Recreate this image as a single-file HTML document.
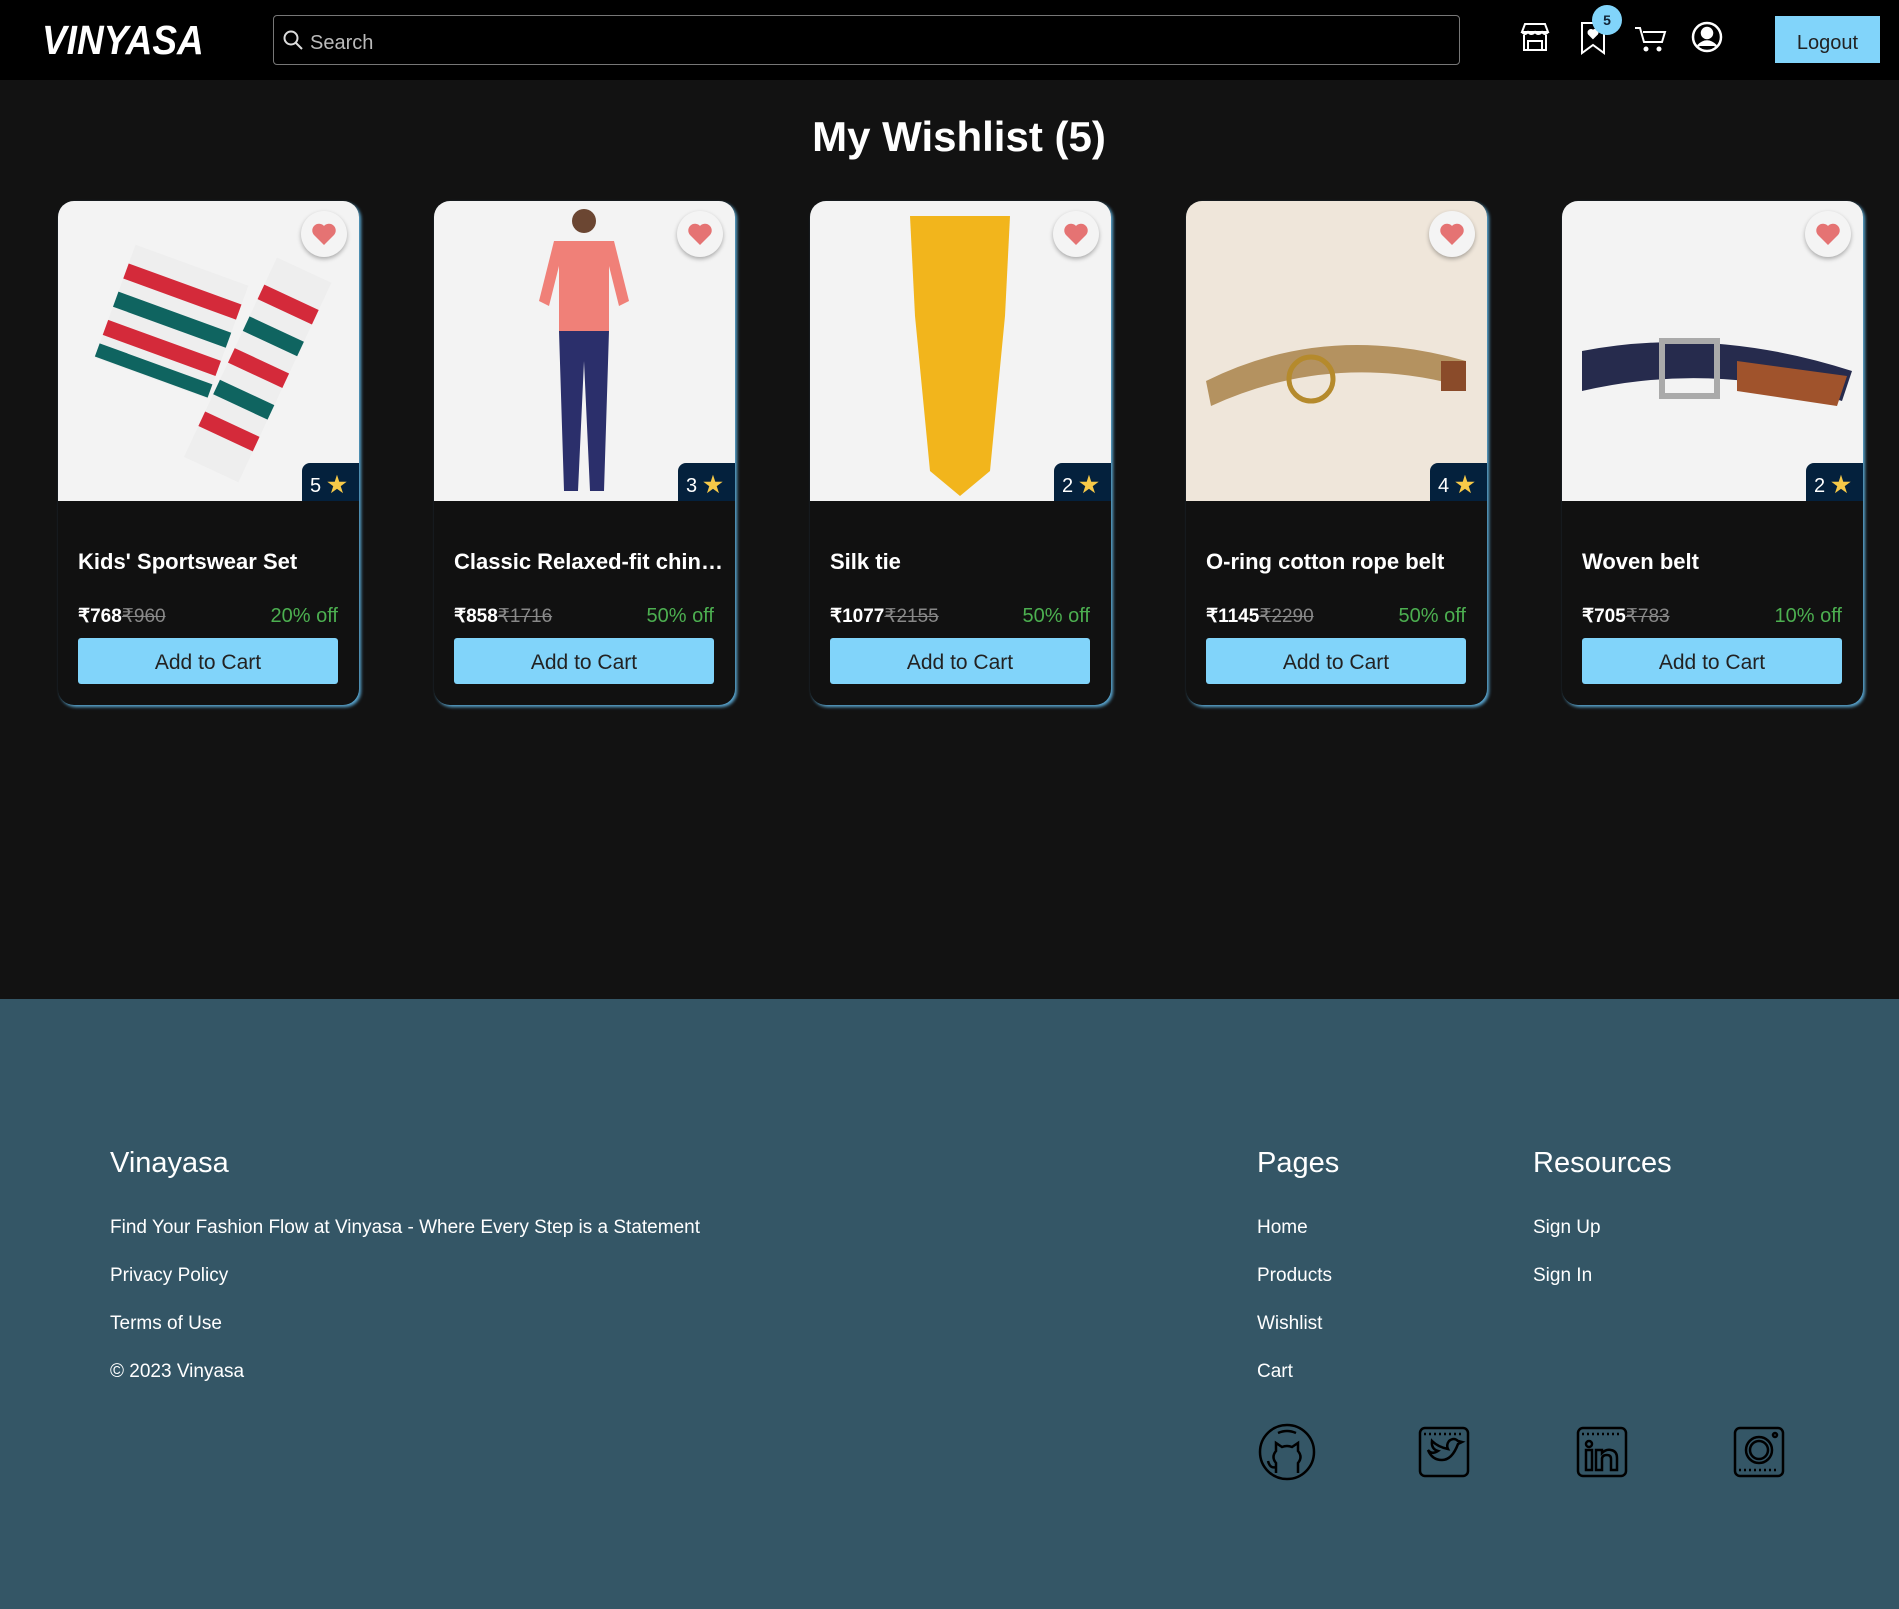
<!DOCTYPE html>
<html><head><meta charset="utf-8"><style>
*{box-sizing:border-box;margin:0;padding:0}
body{width:1899px;height:1609px;background:#121212;font-family:"Liberation Sans",sans-serif;color:#fff;position:relative;overflow:hidden}
.hdr{position:absolute;left:0;top:0;width:1899px;height:80px;background:#000}
.logo{position:absolute;left:42px;top:20px;font-size:37px;font-weight:bold;font-style:italic;letter-spacing:0px;transform:scaleY(1.1)}
.search{position:absolute;left:273px;top:15px;width:1187px;height:50px;border:1px solid #777;border-radius:4px;background:#000}
.search span{position:absolute;left:36px;top:16px;font-size:20px;color:#bbb}
.ico{position:absolute;top:20px}
.logout{position:absolute;left:1775px;top:16px;width:105px;height:47px;background:#81d4fa;color:#222;font-size:20px;text-align:center;line-height:54px}
.badge{position:absolute;left:1592px;top:5px;width:30px;height:30px;border-radius:50%;background:#81d4fa;color:#123;font-size:14px;font-weight:bold;text-align:center;line-height:30px}
h1{position:absolute;left:0;width:1918px;top:113px;text-align:center;font-size:42px;font-weight:bold}
.card{position:absolute;top:201px;width:301px;height:504px;background:#111;border-radius:16px;box-shadow:2px 2px 3px #5ba9d4;overflow:hidden}
.img{position:absolute;left:0;top:0;width:301px;height:300px;background:#f3f3f3;overflow:hidden}
.heart{position:absolute;right:12px;top:10px;width:46px;height:46px;border-radius:50%;background:#f4f4f4;box-shadow:0 2px 4px rgba(0,0,0,.3)}
.rate{position:absolute;right:0;top:262px;width:57px;height:38px;background:#04213d;border-top-left-radius:8px;font-size:20px;padding:9px 0 0 8px}
.rate b{color:#f7c948;font-size:22px;margin-left:6px}
.name{position:absolute;left:20px;top:348px;font-size:22px;font-weight:bold;width:270px;white-space:nowrap;overflow:hidden;text-overflow:ellipsis}
.price{position:absolute;left:20px;top:404px;font-size:19px;font-weight:bold}
.price s{color:#888;font-weight:normal}
.off{position:absolute;right:21px;top:404px;font-size:20px;color:#4caf50}
.btn{position:absolute;left:20px;top:437px;width:260px;height:46px;background:#81d4fa;border-radius:3px;color:#222;font-size:21px;text-align:center;line-height:50px}
.foot{position:absolute;left:0;top:999px;width:1899px;height:610px;background:#345666}
.foot .t{position:absolute;font-size:29px}
.foot .l{position:absolute;font-size:19px}
</style></head><body>
<div class="hdr">
<div class="logo">VINYASA</div>
<div class="search"><svg style="position:absolute;left:8px;top:13px" width="22" height="22" viewBox="0 0 22 22" fill="none" stroke="#ddd" stroke-width="2"><circle cx="9" cy="9" r="6.5"/><path d="M14 14l6 6"/></svg><span>Search</span></div>
<svg class="ico" style="left:1518px" width="34" height="34" viewBox="0 0 34 34" fill="none" stroke="#fff" stroke-width="2"><path d="M4 12l3-8h20l3 8zM4 12q3 4 6 0q3 4 7 0q3 4 7 0q3 4 6 0M6 15v15h22V15M10 30v-9h14v9"/></svg>
<svg class="ico" style="left:1578px" width="30" height="36" viewBox="0 0 30 36" fill="none" stroke="#fff" stroke-width="2"><path d="M4 3h22v30l-11-8-11 8z"/><path d="M15 18l-4-4a2.5 2.5 0 0 1 4-3a2.5 2.5 0 0 1 4 3z" fill="#fff"/></svg>
<div class="badge">5</div>
<svg class="ico" style="left:1633px;top:24px" width="34" height="30" viewBox="0 0 34 30" fill="none" stroke="#fff" stroke-width="2"><path d="M2 4h5l4 14h18l3-10H10"/><circle cx="13" cy="25" r="1.5" fill="#fff"/><circle cx="26" cy="25" r="1.5" fill="#fff"/></svg>
<svg class="ico" style="left:1690px" width="34" height="34" viewBox="0 0 34 34" fill="none" stroke="#fff" stroke-width="2.5"><circle cx="17" cy="17" r="14"/><circle cx="17" cy="13" r="5" fill="#fff"/><path d="M8 26q9-9 18 0" fill="#fff"/></svg>
<div class="logout">Logout</div>
</div>
<h1>My Wishlist (5)</h1>

<div class="card" style="left:58px"><div class="img">
<svg width="301" height="300"><g transform="rotate(20 110 130)"><rect x="50" y="60" width="120" height="120" fill="#eee"/><rect x="50" y="80" width="120" height="16" fill="#d42a3a"/><rect x="50" y="110" width="120" height="16" fill="#0f6460"/><rect x="50" y="140" width="120" height="16" fill="#d42a3a"/><rect x="50" y="165" width="120" height="14" fill="#0f6460"/></g><g transform="rotate(25 200 180)"><rect x="165" y="60" width="60" height="220" fill="#eee"/><rect x="165" y="90" width="60" height="16" fill="#d42a3a"/><rect x="165" y="125" width="60" height="16" fill="#0f6460"/><rect x="165" y="160" width="60" height="16" fill="#d42a3a"/><rect x="165" y="195" width="60" height="16" fill="#0f6460"/><rect x="165" y="230" width="60" height="16" fill="#d42a3a"/></g></svg>
</div><div class="heart"><svg width="46" height="46" viewBox="0 0 46 46"><path d="M23 34l-10-10a6 6 0 0 1 10-9a6 6 0 0 1 10 9z" fill="#e57373"/></svg></div><div class="rate">5<b>★</b></div>
<div class="name">Kids' Sportswear Set</div><div class="price">₹768<s>₹960</s></div><div class="off">20% off</div><div class="btn">Add to Cart</div></div>

<div class="card" style="left:434px"><div class="img">
<svg width="301" height="300"><circle cx="150" cy="20" r="12" fill="#6b4632"/><path d="M120 40h60l15 60l-10 5l-10-40v65h-50v-65l-10 40l-10-5z" fill="#f08078"/><path d="M125 130h50l-5 160h-14l-6-130l-6 130h-14z" fill="#2b2f6b"/></svg>
</div><div class="heart"><svg width="46" height="46" viewBox="0 0 46 46"><path d="M23 34l-10-10a6 6 0 0 1 10-9a6 6 0 0 1 10 9z" fill="#e57373"/></svg></div><div class="rate">3<b>★</b></div>
<div class="name">Classic Relaxed-fit chino pant</div><div class="price">₹858<s>₹1716</s></div><div class="off">50% off</div><div class="btn">Add to Cart</div></div>

<div class="card" style="left:810px"><div class="img">
<svg width="301" height="300"><path d="M100 15h100l-5 100l-15 155l-30 25l-30-25l-15-155z" fill="#f2b51c"/></svg>
</div><div class="heart"><svg width="46" height="46" viewBox="0 0 46 46"><path d="M23 34l-10-10a6 6 0 0 1 10-9a6 6 0 0 1 10 9z" fill="#e57373"/></svg></div><div class="rate">2<b>★</b></div>
<div class="name">Silk tie</div><div class="price">₹1077<s>₹2155</s></div><div class="off">50% off</div><div class="btn">Add to Cart</div></div>

<div class="card" style="left:1186px"><div class="img" style="background:#efe6da">
<svg width="301" height="300"><path d="M20 180q120-60 260-20l-5 25q-130-35-250 20z" fill="#b49260"/><circle cx="125" cy="178" r="22" fill="none" stroke="#b58a2c" stroke-width="5"/><rect x="255" y="160" width="25" height="30" fill="#8a4b2a"/></svg>
</div><div class="heart"><svg width="46" height="46" viewBox="0 0 46 46"><path d="M23 34l-10-10a6 6 0 0 1 10-9a6 6 0 0 1 10 9z" fill="#e57373"/></svg></div><div class="rate">4<b>★</b></div>
<div class="name">O-ring cotton rope belt</div><div class="price">₹1145<s>₹2290</s></div><div class="off">50% off</div><div class="btn">Add to Cart</div></div>

<div class="card" style="left:1562px"><div class="img">
<svg width="301" height="300"><path d="M20 150q130-25 270 20l-10 30q-130-40-260-10z" fill="#262b4d"/><rect x="100" y="140" width="55" height="55" fill="none" stroke="#aaa" stroke-width="6"/><path d="M175 160l110 15l-10 30l-100-15z" fill="#a0532c"/></svg>
</div><div class="heart"><svg width="46" height="46" viewBox="0 0 46 46"><path d="M23 34l-10-10a6 6 0 0 1 10-9a6 6 0 0 1 10 9z" fill="#e57373"/></svg></div><div class="rate">2<b>★</b></div>
<div class="name">Woven belt</div><div class="price">₹705<s>₹783</s></div><div class="off">10% off</div><div class="btn">Add to Cart</div></div>

<div class="foot">
<div class="t" style="left:110px;top:148px">Vinayasa</div>
<div class="l" style="left:110px;top:218px">Find Your Fashion Flow at Vinyasa - Where Every Step is a Statement</div>
<div class="l" style="left:110px;top:266px">Privacy Policy</div>
<div class="l" style="left:110px;top:314px">Terms of Use</div>
<div class="l" style="left:110px;top:362px">© 2023 Vinyasa</div>
<div class="t" style="left:1257px;top:148px">Pages</div>
<div class="l" style="left:1257px;top:218px">Home</div>
<div class="l" style="left:1257px;top:266px">Products</div>
<div class="l" style="left:1257px;top:314px">Wishlist</div>
<div class="l" style="left:1257px;top:362px">Cart</div>
<div class="t" style="left:1533px;top:148px">Resources</div>
<div class="l" style="left:1533px;top:218px">Sign Up</div>
<div class="l" style="left:1533px;top:266px">Sign In</div>
<svg style="position:absolute;left:1258px;top:424px" width="58" height="58" viewBox="0 0 58 58" fill="none" stroke="#000" stroke-width="2.5"><ellipse cx="29" cy="29" rx="27" ry="27"/><path d="M18 50v-10q-5-6 0-12v-8l6 4q5-2 10 0l6-4v8q5 6 0 12v10M18 44q-6 2-8-6"/><path d="M20 10q9-4 18 0"/></svg>
<svg style="position:absolute;left:1418px;top:427px" width="52" height="52" viewBox="0 0 52 52" fill="none" stroke="#000" stroke-width="2.5"><rect x="2" y="2" width="48" height="48" rx="5"/><path d="M6 8h40" stroke-dasharray="2 3"/><path d="M10 24q4 10 14 10q10 0 16-16l4-2l-4-1q-4-4-9 0q-3 4-1 8q-10-2-16-8q-1 8 6 10q-6 4-10-1z"/></svg>
<svg style="position:absolute;left:1576px;top:427px" width="52" height="52" viewBox="0 0 52 52" fill="none" stroke="#000" stroke-width="2.5"><rect x="2" y="2" width="48" height="48" rx="5"/><path d="M6 8h40" stroke-dasharray="2 3"/><circle cx="13" cy="18" r="3"/><path d="M10 24h6v20h-6zM20 24h6v3q4-4 9-3q6 1 6 8v12h-6v-11q0-4-4-4q-5 0-5 4v11h-6z"/></svg>
<svg style="position:absolute;left:1733px;top:427px" width="52" height="52" viewBox="0 0 52 52" fill="none" stroke="#000" stroke-width="2.5"><rect x="2" y="2" width="48" height="48" rx="5"/><path d="M6 44h40" stroke-dasharray="2 3"/><circle cx="26" cy="24" r="13"/><circle cx="26" cy="24" r="9"/><circle cx="42" cy="9" r="2"/></svg>
</div>
</body></html>
